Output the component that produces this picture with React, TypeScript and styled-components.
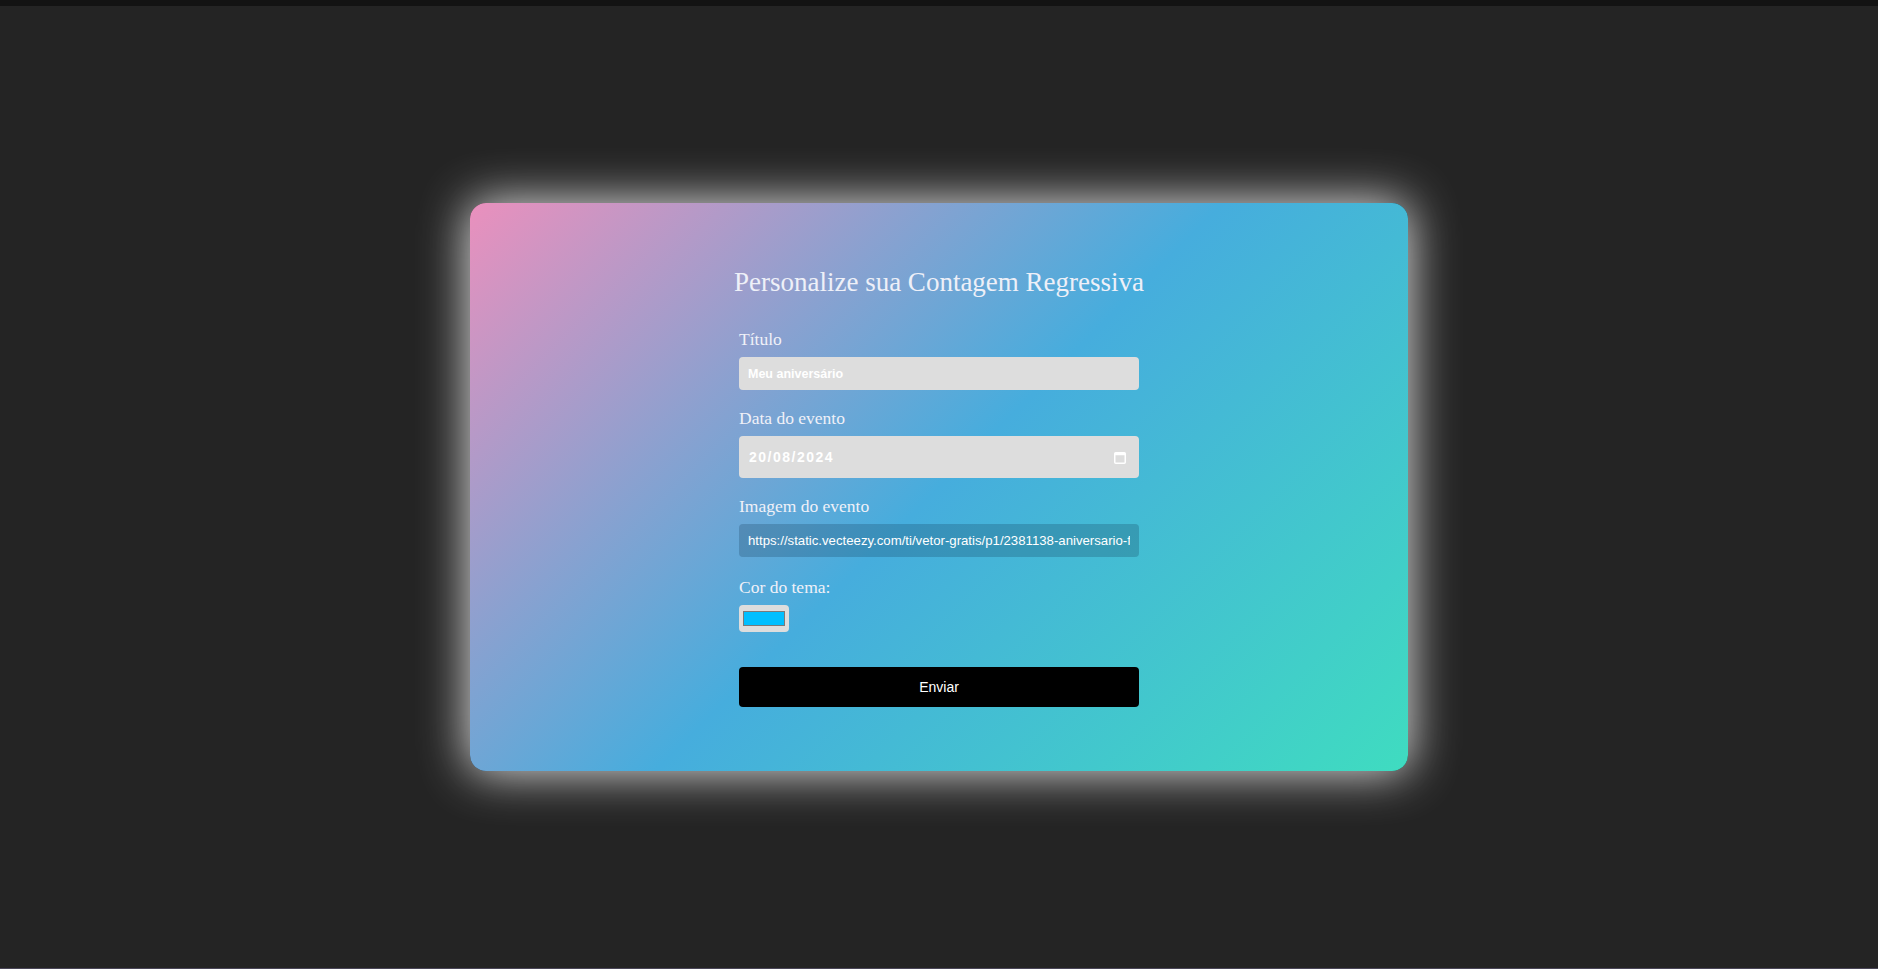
import React from "react";
import styled, { createGlobalStyle } from "styled-components";

const GlobalStyle = createGlobalStyle`
  html, body { margin: 0; padding: 0; background: #242424; }
  body { font-family: "Liberation Sans", Arial, sans-serif; }
  * { box-sizing: border-box; }
`;

const Page = styled.div`
  min-height: 100vh;
  display: flex;
  flex-direction: column;
  background: #242424;
`;

const TopBar = styled.div`
  height: 6px;
  background: #131313;
  flex-shrink: 0;
`;

const Main = styled.main`
  flex: 1;
  display: flex;
  align-items: center;
  justify-content: center;
`;

const BottomLine = styled.div`
  height: 1px;
  background: #4a4658;
  flex-shrink: 0;
`;

const Card = styled.section`
  width: 938px;
  padding: 64px 0;
  border-radius: 16px;
  background: linear-gradient(135deg, #ea90bd 0%, #46addd 50%, #3fdcc0 100%);
  box-shadow: 0 0 48px 2px rgba(255, 255, 255, 0.85);
  display: flex;
  flex-direction: column;
  align-items: center;
`;

const Title = styled.h2`
  margin: 0 0 32px;
  font-family: "Liberation Serif", "Times New Roman", serif;
  font-weight: normal;
  font-size: 27px;
  line-height: 30px;
  color: #eef0f8;
`;

const Form = styled.form`
  width: 400px;
  display: flex;
  flex-direction: column;
`;

const Field = styled.div<{ $top?: number }>`
  display: flex;
  flex-direction: column;
  margin-top: ${(p) => p.$top ?? 0}px;
`;

const Label = styled.label`
  font-family: "Liberation Serif", "Times New Roman", serif;
  font-size: 17.5px;
  line-height: 20px;
  color: #f0f1f8;
  margin-bottom: 8px;
`;

const TextInput = styled.input<{ $dark?: boolean }>`
  width: 100%;
  height: 33px;
  border: none;
  outline: none;
  border-radius: 4px;
  padding: 0 9px;
  background: ${(p) => (p.$dark ? "rgba(10, 40, 70, 0.22)" : "#dddddd")};
  color: #ffffff;
  font-family: "Liberation Sans", Arial, sans-serif;
  font-size: ${(p) => (p.$dark ? "13.2px" : "12.5px")};
  font-weight: ${(p) => (p.$dark ? "normal" : "bold")};
`;

const DateBox = styled.div`
  height: 42px;
  border-radius: 4px;
  background: #dddddd;
  display: flex;
  align-items: center;
  padding: 0 13px 0 10px;
`;

const DateText = styled.input`
  flex: 1;
  min-width: 0;
  border: none;
  outline: none;
  background: transparent;
  padding: 0;
  color: #ffffff;
  font-family: "Liberation Sans", Arial, sans-serif;
  font-size: 14px;
  font-weight: bold;
  letter-spacing: 1.5px;
`;

const CalendarIcon = styled.svg`
  width: 12px;
  height: 13px;
  flex-shrink: 0;
`;

const ColorButton = styled.label`
  width: 50px;
  height: 27px;
  border-radius: 4px;
  background: #dddddd;
  display: flex;
  align-items: center;
  justify-content: center;
  cursor: pointer;
`;

const Swatch = styled.span<{ $color: string }>`
  width: 42px;
  height: 15px;
  border: 1px solid #7a7a7a;
  background: ${(p) => p.$color};
`;

const SubmitButton = styled.button`
  margin-top: 35px;
  height: 40px;
  width: 100%;
  border: none;
  border-radius: 4px;
  background: #000000;
  color: #ffffff;
  font-family: "Liberation Sans", Arial, sans-serif;
  font-size: 14px;
  cursor: pointer;
`;

export default function App() {
  return (
    <>
      <GlobalStyle />
      <Page>
        <TopBar />
        <Main>
          <Card>
            <Title>Personalize sua Contagem Regressiva</Title>
            <Form onSubmit={(e) => e.preventDefault()}>
              <Field>
                <Label htmlFor="titulo">Título</Label>
                <TextInput id="titulo" type="text" defaultValue="Meu aniversário" />
              </Field>
              <Field $top={18}>
                <Label htmlFor="data">Data do evento</Label>
                <DateBox>
                  <DateText id="data" type="text" defaultValue="20/08/2024" />
                  <CalendarIcon viewBox="0 0 12 13">
                    <rect x="0.75" y="1.75" width="10.5" height="10.5" rx="1" fill="none" stroke="#ffffff" strokeWidth="1.5" />
                    <rect x="0.75" y="1.75" width="10.5" height="2.5" fill="#ffffff" />
                  </CalendarIcon>
                </DateBox>
              </Field>
              <Field $top={18}>
                <Label htmlFor="imagem">Imagem do evento</Label>
                <TextInput
                  id="imagem"
                  type="text"
                  $dark
                  defaultValue="https://static.vecteezy.com/ti/vetor-gratis/p1/2381138-aniversario-feliz-com-baloes-vetor.jpg"
                />
              </Field>
              <Field $top={20}>
                <Label>Cor do tema:</Label>
                <ColorButton>
                  <Swatch $color="#00bfff" />
                </ColorButton>
              </Field>
              <SubmitButton type="submit">Enviar</SubmitButton>
            </Form>
          </Card>
        </Main>
        <BottomLine />
      </Page>
    </>
  );
}
